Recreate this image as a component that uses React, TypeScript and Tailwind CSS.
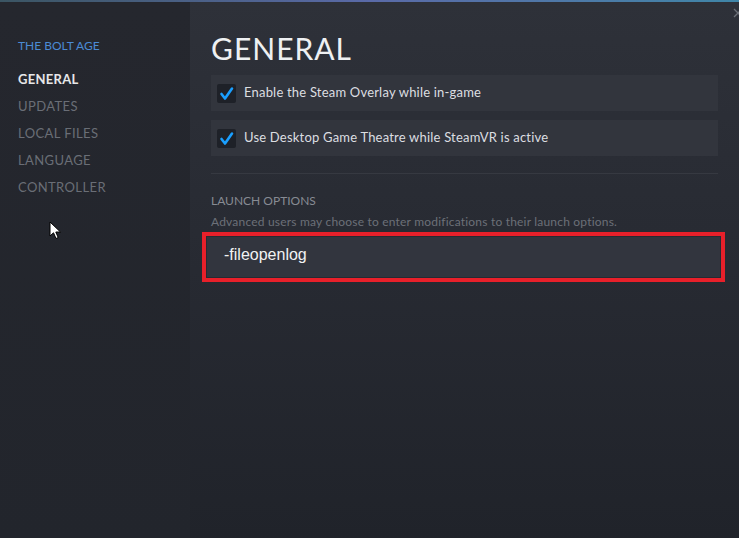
const navItems = ["UPDATES", "LOCAL FILES", "LANGUAGE", "CONTROLLER"];

const options = [
  "Enable the Steam Overlay while in-game",
  "Use Desktop Game Theatre while SteamVR is active",
];

const App = () => {
  return (
    <div
      className="relative w-[739px] h-[538px] overflow-hidden flex flex-col bg-[#24272e]"
      style={{ fontFamily: "Lato, 'Open Sans', sans-serif" }}
    >
      {/* desktop peeking through above the window */}
      <div className="h-[2px] bg-linear-to-r from-[#3b5563] via-[#5a6aa8] to-[#3f86a8]" />

      <div className="flex flex-1">
        {/* Sidebar */}
        <aside className="w-[190px] bg-linear-to-b from-[#25272e] to-[#22252c] pt-[30px] pl-[18px]">
          <div className="text-[12px] leading-[27px] text-[#4b8ad4] mb-[7px]">THE BOLT AGE</div>
          <div className="text-[13px] leading-[27px] tracking-[0.3px] font-bold text-[#e6e7e9]">GENERAL</div>
          {navItems.map((item) => (
            <div key={item} className="text-[13px] leading-[27px] tracking-[0.4px] text-[#6a6e76]">
              {item}
            </div>
          ))}
        </aside>

        {/* Main */}
        <main className="flex-1 bg-linear-to-b from-[#2e3139] via-[#272a32] to-[#20232a] px-[21px] pt-[28px]">
          <h1 className="text-[30px] leading-[36px] tracking-[1px] text-[#eef0f2] font-normal">GENERAL</h1>

          <div className="mt-[9px] flex flex-col gap-[9px]">
            {options.map((label) => (
              <div key={label} className="h-[36px] bg-[#32353d] flex items-center pl-[6px] gap-[8px]">
                <div className="w-[19px] h-[19px] bg-[#1e2128] rounded-[2px]">
                  <svg viewBox="0 0 19 19" className="w-[19px] h-[19px]">
                    <path
                      d="M4.5 10 L8 14.5 L15 4.5"
                      fill="none"
                      stroke="#1a9fff"
                      strokeWidth="2.6"
                      strokeLinecap="round"
                      strokeLinejoin="round"
                    />
                  </svg>
                </div>
                <span className="text-[13px] tracking-[0.2px] text-[#dcdee1]">{label}</span>
              </div>
            ))}
          </div>

          <div className="mt-[17px] h-px bg-[#363941]" />

          <div className="mt-[19px] text-[12px] leading-[16px] text-[#878b93]">LAUNCH OPTIONS</div>
          <div className="mt-[5px] text-[12px] leading-[15px] tracking-[0.2px] text-[#6c7078]">
            Advanced users may choose to enter modifications to their launch options.
          </div>

          {/* highlighted launch options field */}
          <div className="mt-[3px] ml-[-9px] mr-[-7px] border-4 border-[#e8202a] p-[1px]">
            <div
              className="h-[40px] bg-[#32353e] flex items-center pl-[17px] pb-[4px] text-[16px] text-[#f1f2f3]"
              style={{ fontFamily: "'Liberation Sans', Arial, sans-serif" }}
            >
              -fileopenlog
            </div>
          </div>
        </main>
      </div>

      {/* close button, cut off by the window edge */}
      <svg className="absolute top-[8px] right-[-4px] w-[10px] h-[10px]" viewBox="0 0 10 10">
        <path d="M1 1 L9 9 M9 1 L1 9" stroke="#6b6f77" strokeWidth="1.3" />
      </svg>

      {/* mouse cursor */}
      <svg className="absolute left-[49px] top-[221px] w-[13px] h-[19px]" viewBox="0 0 13 19">
        <path
          d="M1 1 L1 15 L4.5 11.8 L7 17.5 L9.2 16.5 L6.8 11 L11.5 11 Z"
          fill="#ffffff"
          stroke="#000000"
          strokeWidth="1"
          strokeLinejoin="round"
        />
      </svg>
    </div>
  );
};

export default App;
